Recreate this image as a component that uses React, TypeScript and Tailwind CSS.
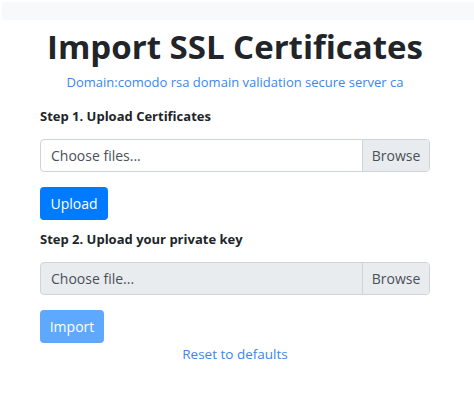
export default function App() {
  return (
    <div className="w-[474px] h-[404px] bg-white font-['Open_Sans',sans-serif] overflow-hidden">
      <div className="mt-[2px] ml-[2px] h-[18px] bg-[#f8f9fa]" />
      <div className="px-[40px] pr-[44px]">
        <h1 className="mt-[5px] text-center text-[33px] leading-[44px] font-bold text-[#212529]">
          Import SSL Certificates
        </h1>
        <p className="mt-[3px] text-center text-[13px] leading-[20px] text-[#3b86ee]">
          Domain:comodo rsa domain validation secure server ca
        </p>

        <h5 className="mt-[15px] text-[13px] leading-[18px] font-bold text-[#212529]">
          Step 1. Upload Certificates
        </h5>
        <div className="mt-[14px] flex h-[33px] rounded-[4px] border border-[#ced4da] bg-white text-[14px] text-[#495057] overflow-hidden">
          <div className="flex-1 flex items-center pl-[10px]">Choose files...</div>
          <div className="w-[67px] flex items-center justify-center bg-[#e9ecef] border-l border-[#ced4da]">Browse</div>
        </div>
        <button className="mt-[15px] h-[33px] w-[68px] rounded-[4px] bg-[#007bff] text-white text-[14px]">
          Upload
        </button>

        <h5 className="mt-[10px] text-[13px] leading-[18px] font-bold text-[#212529]">
          Step 2. Upload your private key
        </h5>
        <div className="mt-[14px] flex h-[33px] rounded-[4px] border border-[#ced4da] bg-[#e9ecef] text-[14px] text-[#495057] overflow-hidden">
          <div className="flex-1 flex items-center pl-[10px]">Choose file...</div>
          <div className="w-[67px] flex items-center justify-center bg-[#e9ecef] border-l border-[#ced4da]">Browse</div>
        </div>
        <button className="mt-[15px] h-[33px] w-[64px] rounded-[4px] bg-[#5ea9ff] text-white text-[14px]">
          Import
        </button>
        <div className="mt-[1px] text-center text-[13.5px] leading-[20px] text-[#3b86ee]">
          Reset to defaults
        </div>
      </div>
    </div>
  );
}
